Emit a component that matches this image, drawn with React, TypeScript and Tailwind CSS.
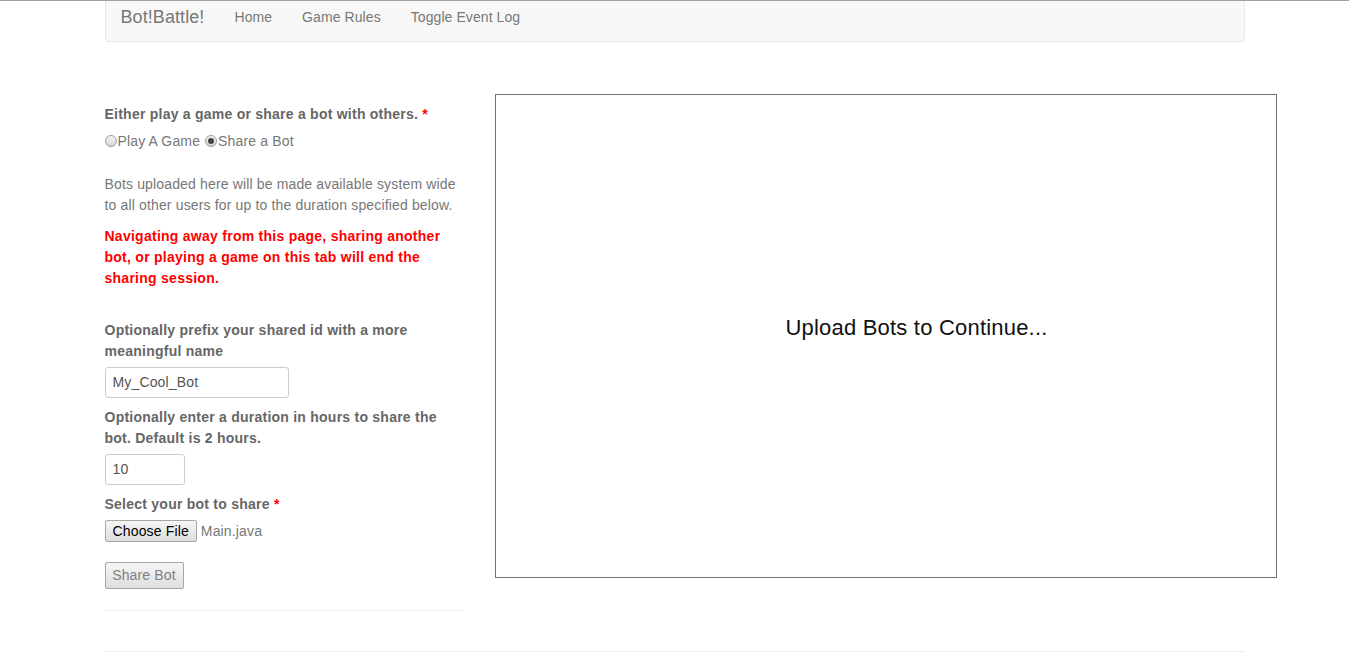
const Radio = ({checked}: {checked?: boolean}) => (
    <span className="inline-flex items-center justify-center w-[12px] h-[12px] rounded-full border border-[#9a9a9a] bg-gradient-to-b from-[#f4f4f4] to-[#d6d6d6] mr-px">
        {checked ? <span className="w-[6px] h-[6px] rounded-full bg-[#444]"></span> : null}
    </span>
);

const Label = ({children, required}: {children: React.ReactNode, required?: boolean}) => (
    <div className="font-bold text-[#666] leading-[21px] tracking-[0.24px]">
        {children}
        {required ? <span className="text-[#f00]"> *</span> : null}
    </div>
);

export default function App() {
    return (
        <div className="min-h-[652px] bg-white border-t border-[#a0a0a0] text-[14px] tracking-[0.15px] font-['Liberation_Sans',Arial,sans-serif] text-[#777]">
            <div className="w-[1140px] mx-auto">
                <nav className="h-[41px] bg-[#f8f8f8] border border-t-0 border-[#e7e7e7] rounded-b-[4px] flex items-start pt-[6px] tracking-[0.08px]">
                    <span className="px-[15px] text-[18px] leading-[20px] text-[#777]">Bot!Battle!</span>
                    <span className="px-[15px] leading-[20px]">Home</span>
                    <span className="px-[15px] leading-[20px]">Game Rules</span>
                    <span className="px-[15px] leading-[20px]">Toggle Event Log</span>
                </nav>

                <div className="flex mt-[52px]">
                    <div className="w-[360px] shrink-0 pt-[10px]">
                        <Label required>Either play a game or share a bot with others.</Label>
                        <div className="flex items-center mt-[6px] h-[20px]">
                            <Radio />
                            <span>Play A Game</span>
                            <span className="w-[5px]"></span>
                            <Radio checked />
                            <span>Share a Bot</span>
                        </div>
                        <p className="mt-[23px] leading-[21px]">
                            Bots uploaded here will be made available system wide to all other users for up to the duration specified below.
                        </p>
                        <p className="mt-[10px] leading-[21px] font-bold text-[#f00] tracking-[0.26px]">
                            Navigating away from this page, sharing another bot, or playing a game on this tab will end the sharing session.
                        </p>

                        <div className="mt-[31px]">
                            <Label>Optionally prefix your shared id with a more meaningful name</Label>
                        </div>
                        <div className="mt-[5px] w-[184px] h-[31px] border border-[#ccc] rounded-[3px] flex items-center px-[7px] text-[#555]">My_Cool_Bot</div>

                        <div className="mt-[9px]">
                            <Label>Optionally enter a duration in hours to share the bot. Default is 2 hours.</Label>
                        </div>
                        <div className="mt-[5px] w-[80px] h-[31px] border border-[#ccc] rounded-[3px] flex items-center px-[7px] text-[#555]">10</div>

                        <div className="mt-[9px]">
                            <Label required>Select your bot to share</Label>
                        </div>
                        <div className="mt-[5px] flex items-center">
                            <span className="h-[22px] px-[7px] flex items-center border border-[#a6a6a6] rounded-[2px] bg-gradient-to-b from-[#f6f6f6] to-[#dedede] text-black">Choose File</span>
                            <span className="ml-[4px]">Main.java</span>
                        </div>
                        <div className="mt-[20px] w-[79px] h-[27px] flex items-center justify-center border border-[#a6a6a6] rounded-[2px] bg-gradient-to-b from-[#f6f6f6] to-[#dedede] text-[#808080]">Share Bot</div>

                        <div className="mt-[21px] border-t border-[#eee] w-[359px]"></div>
                    </div>

                    <div className="ml-[30px] shrink-0 w-[782px] h-[484px] border border-[#707070]">
                        <div className="pl-[290px] pt-[220px] text-[22px] leading-[26px] tracking-[0.2px] text-[#111]">Upload Bots to Continue...</div>
                    </div>
                </div>

                <div className="mt-[40px] border-t border-[#eee]"></div>
            </div>
        </div>
    );
}
